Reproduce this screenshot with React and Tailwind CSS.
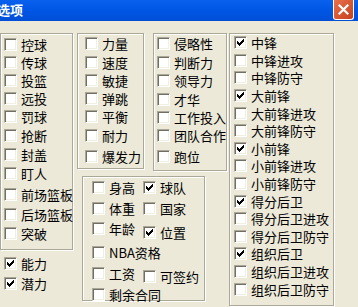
import React from 'react';
import clsx from 'clsx';

const group1 = [
  { label: '控球', cls: '' },
  { label: '传球', cls: '' },
  { label: '投篮', cls: '' },
  { label: '远投', cls: '' },
  { label: '罚球', cls: '' },
  { label: '抢断', cls: 'mt-[1px]' },
  { label: '封盖', cls: 'mt-[1px]' },
  { label: '盯人', cls: 'mt-[1px]' },
  { label: '前场篮板', cls: 'mt-[3px]' },
  { label: '后场篮板', cls: 'mt-[2px]' },
  { label: '突破', cls: 'mt-[1px]' },
];

const group2 = [
  { label: '力量', cls: '' },
  { label: '速度', cls: 'mt-[1px]' },
  { label: '敏捷', cls: '' },
  { label: '弹跳', cls: '' },
  { label: '平衡', cls: '' },
  { label: '耐力', cls: 'mt-[1px]' },
  { label: '爆发力', cls: 'mt-[3px]' },
];

const group3 = [
  { label: '侵略性', cls: '' },
  { label: '判断力', cls: 'mt-[1px]' },
  { label: '领导力', cls: '' },
  { label: '才华', cls: 'mt-[1px]' },
  { label: '工作投入', cls: '' },
  { label: '团队合作', cls: '' },
  { label: '跑位', cls: 'mt-[3px]' },
];

const positions = [
  ['中锋', true], ['中锋进攻', false], ['中锋防守', false],
  ['大前锋', true], ['大前锋进攻', false], ['大前锋防守', false],
  ['小前锋', true], ['小前锋进攻', false], ['小前锋防守', false],
  ['得分后卫', true], ['得分后卫进攻', false], ['得分后卫防守', false],
  ['组织后卫', true], ['组织后卫进攻', false], ['组织后卫防守', false],
];

const group5 = [
  { left: '身高', right: '球队', rightChecked: true, cls: 'mt-[1px]', rcls: '' },
  { left: '体重', right: '国家', cls: 'mt-[3px]', rcls: '' },
  { left: '年龄', right: '位置', rightChecked: true, cls: 'mt-[2px]', rcls: 'mt-[4px]' },
  { left: 'NBA资格', cls: 'mt-[2px]' },
  { left: '工资', right: '可签约', cls: 'mt-[3px]', rcls: 'mt-[3px]' },
  { left: '剩余合同', cls: '' },
];

function Box({ checked }) {
  return (
    <span className="relative w-[13px] h-[13px] shrink-0 bg-white border border-t-[#aca899] border-l-[#aca899] border-r-white border-b-white shadow-[inset_1px_1px_0_#716f64,inset_-1px_-1px_0_#f1efe2]">
      {checked && (
        <svg className="absolute left-[2px] top-[2px]" width="7" height="7" viewBox="0 0 7 7" shapeRendering="crispEdges">
          <rect x="6" y="0" width="1" height="1" fill="#000" />
          <rect x="5" y="1" width="2" height="1" fill="#000" />
          <rect x="0" y="2" width="1" height="1" fill="#000" />
          <rect x="4" y="2" width="3" height="1" fill="#000" />
          <rect x="0" y="3" width="2" height="1" fill="#000" />
          <rect x="3" y="3" width="3" height="1" fill="#000" />
          <rect x="0" y="4" width="5" height="1" fill="#000" />
          <rect x="1" y="5" width="3" height="1" fill="#000" />
          <rect x="2" y="6" width="1" height="1" fill="#000" />
        </svg>
      )}
    </span>
  );
}

function Check({ label, checked, className, h = 'h-[18px]' }) {
  return (
    <div className={clsx('flex items-center whitespace-nowrap', h, className)}>
      <Box checked={checked} />
      <span className="ml-[4px] text-[13px] leading-none">{label}</span>
    </div>
  );
}

function Group({ className, children }) {
  return (
    <div className={clsx('border border-[#aca899] shadow-[inset_1px_1px_0_#fff,1px_1px_0_#fff] flex flex-col', className)}>
      {children}
    </div>
  );
}

export default function App() {
  return (
    <div className="w-[358px] h-[307px] overflow-hidden bg-[#ece9d8] text-black font-['Noto_Sans_CJK_SC',sans-serif]">
      {/* Title bar */}
      <div className="h-[21px] flex items-start bg-gradient-to-b from-[#0a61ee] via-[#0056e4] to-[#004fd6]">
        <span className="ml-[-3px] mt-[3px] text-white font-bold text-[13px] leading-none">选项</span>
        <div className="ml-auto mr-[4px] w-[21px] h-[20px] rounded-b-[3px] border border-t-0 border-white bg-gradient-to-br from-[#e8704a] to-[#c8401c] flex items-center justify-center">
          <svg width="11" height="11" viewBox="0 0 11 11">
            <path d="M1.5 1.5 L9.5 9.5 M9.5 1.5 L1.5 9.5" stroke="#fff" strokeWidth="2.2" strokeLinecap="square" />
          </svg>
        </div>
      </div>

      {/* Body */}
      <div className="flex items-start pt-[12px]">
        <div className="w-[73px] flex flex-col">
          <Group className="h-[217px] pl-[3px] pt-[1px]">
            {group1.map(i => <Check key={i.label} label={i.label} className={i.cls} />)}
          </Group>
          <div className="pl-[4px] mt-[4px]">
            <Check label="能力" checked />
            <Check label="潜力" checked className="mt-[2px]" />
          </div>
        </div>

        <div className="ml-[4px] w-[150px] flex flex-col">
          <div className="flex items-start">
            <Group className="w-[67px] h-[136px] pl-[7px]">
              {group2.map(i => <Check key={i.label} label={i.label} className={i.cls} />)}
            </Group>
            <Group className="ml-[9px] w-[74px] h-[138px] pl-[3px]">
              {group3.map(i => <Check key={i.label} label={i.label} className={i.cls} />)}
            </Group>
          </div>
          <Group className="mt-[5px] ml-[5px] w-[123px] h-[125px] pl-[9px]">
            {group5.map(r => (
              <div key={r.left} className={clsx('flex items-start', r.cls)}>
                <Check label={r.left} className="w-[51px]" />
                {r.right && <Check label={r.right} checked={r.rightChecked} className={r.rcls} />}
              </div>
            ))}
          </Group>
        </div>

        <Group className="ml-[2px] w-[105px] h-[273px] pl-[4px]">
          {positions.map(([label, checked]) => (
            <Check key={label} label={label} checked={checked} h="h-[17.6px]" />
          ))}
        </Group>
      </div>
    </div>
  );
}
